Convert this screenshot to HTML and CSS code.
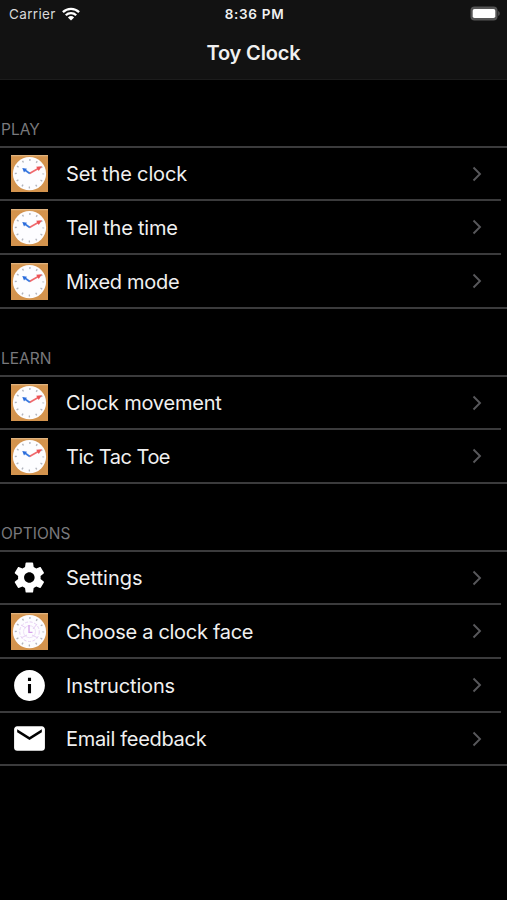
FILE: index.html
```html
<!DOCTYPE html>
<html lang="en">
<head>
<meta charset="utf-8">
<title>Toy Clock</title>
<link rel="stylesheet" href="styles.css">
</head>
<body>
<svg class="defs" width="0" height="0" aria-hidden="true">
  <symbol id="dial" viewBox="0 0 37 37">
    <rect width="37" height="37" fill="#d3934d"/>
    <path d="M0 .6h37" stroke="#dfb27e" stroke-width="1.2"/>
    <circle cx="18.5" cy="18.7" r="16.6" fill="#fdfdff"/>
    <circle cx="18.5" cy="18.7" r="13.7" fill="none" stroke="#b2b5bd" stroke-width="2" stroke-dasharray="1.4 5.773" stroke-dashoffset=".7"/>
  </symbol>
  <symbol id="clock" viewBox="0 0 37 37">
    <use href="#dial"/>
    <path d="M18.5 18.4 28.5 12.8" stroke="#f0696c" stroke-width="1.7"/>
    <path d="M25.2 11.8 31 11.2 27.7 16z" fill="#ec5256"/>
    <path d="M18.8 18.4 13.5 14.8" stroke="#3a7be0" stroke-width="1.8"/>
    <path d="M11.3 12.9 16 13.7 13 17.5z" fill="#2a6cdc"/>
  </symbol>
  <symbol id="face" viewBox="0 0 37 37">
    <use href="#dial"/>
    <g fill="none" stroke="#e6cff4" stroke-width="1">
      <circle cx="18.5" cy="18.7" r="9.8" stroke-dasharray="3 1.6"/>
      <circle cx="18.5" cy="18.7" r="6" stroke="#eedff8"/>
      <path d="M10 12l5 3M26 11l-4 5M10 25l6-3M27 25l-6-3"/>
      <path d="M18 12v7.3h3.5" stroke="#d5a2ea" stroke-width="1.3"/>
    </g>
  </symbol>
  <symbol id="chevron" viewBox="0 0 10 16">
    <path d="M1.5 1.5 8 8 1.5 14.5" fill="none" stroke="#58585b" stroke-width="1.9"/>
  </symbol>
</svg>

<header class="top">
  <div class="status">
    <div class="carrier">
      <span>Carrier</span>
      <svg class="wifi" viewBox="0 0 18 14">
        <g fill="none" stroke="#fff" stroke-width="2.3">
          <path d="M.9 5.1a11.6 11.6 0 0 1 16.2 0"/>
          <path d="M3.8 8.2a7.4 7.4 0 0 1 10.4 0"/>
        </g>
        <path d="M9 13.5 5.9 10.4a4.5 4.5 0 0 1 6.2 0z" fill="#fff"/>
      </svg>
    </div>
    <div class="time">8:36 PM</div>
    <svg class="battery" viewBox="0 0 30 15">
      <rect x=".5" y=".5" width="27" height="14" rx="4" fill="#555"/>
      <rect x="2.7" y="3" width="22.6" height="9" rx="1.8" fill="#fff"/>
      <path d="M28.2 5c2 .8 2 4.2 0 5z" fill="#555"/>
    </svg>
  </div>
  <h1 class="title">Toy Clock</h1>
</header>

<main>
  <section class="group play">
    <h2 class="label">PLAY</h2>
    <ul class="list">
      <li class="row"><svg class="icon"><use href="#clock"/></svg><span class="text snug">Set the clock</span><svg class="chevron"><use href="#chevron"/></svg></li>
      <li class="row"><svg class="icon"><use href="#clock"/></svg><span class="text">Tell the time</span><svg class="chevron"><use href="#chevron"/></svg></li>
      <li class="row"><svg class="icon"><use href="#clock"/></svg><span class="text tight">Mixed mode</span><svg class="chevron"><use href="#chevron"/></svg></li>
    </ul>
  </section>
  <section class="group learn">
    <h2 class="label">LEARN</h2>
    <ul class="list">
      <li class="row"><svg class="icon"><use href="#clock"/></svg><span class="text">Clock movement</span><svg class="chevron"><use href="#chevron"/></svg></li>
      <li class="row"><svg class="icon"><use href="#clock"/></svg><span class="text tightest">Tic Tac Toe</span><svg class="chevron"><use href="#chevron"/></svg></li>
    </ul>
  </section>
  <section class="group options">
    <h2 class="label">OPTIONS</h2>
    <ul class="list">
      <li class="row">
        <svg class="icon" viewBox="-.2 -.3 24.6 24.6"><path fill="#fff" d="M19.43 12.98c.04-.32.07-.64.07-.98s-.03-.66-.07-.98l2.11-1.65c.19-.15.24-.42.12-.64l-2-3.46c-.12-.22-.39-.3-.61-.22l-2.49 1c-.52-.4-1.08-.73-1.69-.98l-.38-2.65C14.46 2.18 14.25 2 14 2h-4c-.25 0-.46.18-.49.42l-.38 2.65c-.61.25-1.17.59-1.69.98l-2.49-1c-.23-.09-.49 0-.61.22l-2 3.46c-.13.22-.07.49.12.64l2.11 1.65c-.04.32-.07.65-.07.98s.03.66.07.98l-2.11 1.65c-.19.15-.24.42-.12.64l2 3.46c.12.22.39.3.61.22l2.49-1c.52.4 1.08.73 1.69.98l.38 2.65c.03.24.24.42.49.42h4c.25 0 .46-.18.49-.42l.38-2.65c.61-.25 1.17-.59 1.69-.98l2.49 1c.23.09.49 0 .61-.22l2-3.46c.12-.22.07-.49-.12-.64l-2.11-1.65zM12 15.5c-1.93 0-3.5-1.57-3.5-3.5s1.57-3.5 3.5-3.5 3.5 1.57 3.5 3.5-1.57 3.5-3.5 3.5z"/></svg>
        <span class="text normal">Settings</span><svg class="chevron"><use href="#chevron"/></svg>
      </li>
      <li class="row"><svg class="icon"><use href="#face"/></svg><span class="text tight">Choose a clock face</span><svg class="chevron"><use href="#chevron"/></svg></li>
      <li class="row">
        <svg class="icon" viewBox="0 0 24 24"><path fill="#fff" d="M12 2C6.48 2 2 6.48 2 12s4.48 10 10 10 10-4.48 10-10S17.52 2 12 2zm1 15h-2v-6h2v6zm0-8h-2V7h2v2z"/></svg>
        <span class="text snug">Instructions</span><svg class="chevron"><use href="#chevron"/></svg>
      </li>
      <li class="row">
        <svg class="icon" viewBox="0 0 24 24"><path fill="#fff" d="M20 4H4c-1.1 0-1.99.9-1.99 2L2 18c0 1.1.9 2 2 2h16c1.1 0 2-.9 2-2V6c0-1.1-.9-2-2-2zm0 4l-8 5-8-5V6l8 5 8-5v2z"/></svg>
        <span class="text tight">Email feedback</span><svg class="chevron"><use href="#chevron"/></svg>
      </li>
    </ul>
  </section>
</main>
</body>
</html>
```
FILE: styles.css
```css
* { box-sizing: border-box; }

body {
  margin: 0;
  min-height: 900px;
  background: #000;
  color: #f0f0f0;
  font-family: Inter, "Liberation Sans", sans-serif;
}

.defs { display: block; }

.top {
  height: 80px;
  background: #121212;
  border-bottom: 1px solid #1c1c1c;
}

.status {
  display: grid;
  grid-template-columns: 1fr auto 1fr;
  align-items: center;
  height: 27px;
  padding: 0 7px 0 9px;
  font-size: 13.5px;
}

.carrier {
  display: flex;
  align-items: center;
  gap: 6px;
  color: #d8d8d8;
  letter-spacing: 0.35px;
}

.wifi { width: 18px; height: 14px; }

.time {
  font-weight: 600;
  font-size: 13.5px;
  letter-spacing: 0.7px;
}

.battery {
  width: 30px;
  height: 15px;
  justify-self: end;
}

.title {
  margin: 0;
  padding-top: 1px;
  line-height: 51px;
  font-size: 20px;
  font-weight: 600;
  letter-spacing: -0.15px;
  text-align: center;
}

.group { display: flex; flex-direction: column; justify-content: flex-end; }
.play { height: 228.6px; }
.learn { height: 175.4px; }
.options { height: 282.3px; }

.label {
  margin: 0 0 6px 1px;
  font-size: 15.5px;
  line-height: 20px;
  font-weight: 400;
  color: #79797c;
}

.list {
  margin: 0;
  padding: 0;
  list-style: none;
  border-top: 2px solid #3b3b3c;
}

.row {
  display: flex;
  align-items: center;
  height: 53.7px;
  padding: 0.5px 25px 0 10.5px;
  border-bottom: 2px solid #3b3b3c;
}

.row:not(:last-child) { margin-right: 6px; padding-right: 19px; }

.icon { width: 37px; height: 37px; flex: none; }

.text {
  flex: 1;
  margin-left: 18.5px;
  padding-top: 1.4px;
  font-size: 20px;
  line-height: 28px;
  letter-spacing: -0.22px;
  white-space: nowrap;
}

.normal { letter-spacing: 0; }
.snug { letter-spacing: -0.15px; }
.tight { letter-spacing: -0.3px; }
.tightest { letter-spacing: -0.5px; }

.chevron { width: 10px; height: 16px; flex: none; }
```
